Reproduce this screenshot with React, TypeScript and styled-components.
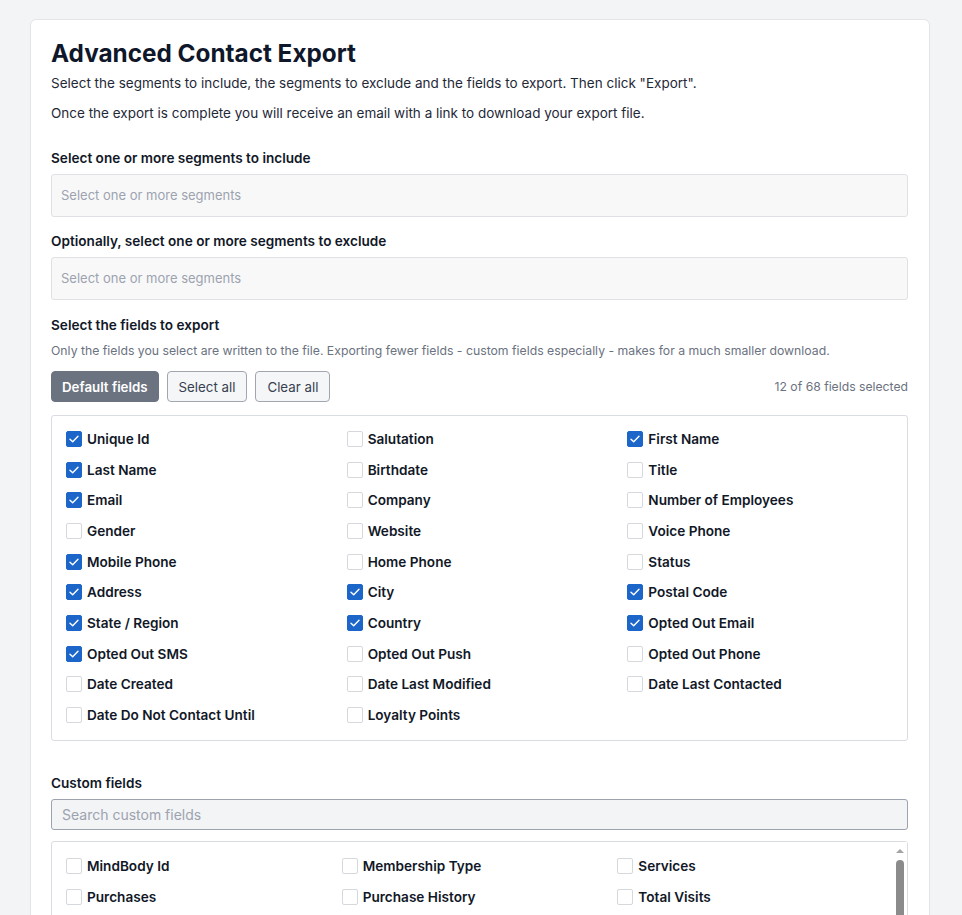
import React, { useState } from 'react';
import styled, { createGlobalStyle } from 'styled-components';

const GlobalStyle = createGlobalStyle`
  html, body {
    margin: 0;
    background: #f3f4f6;
    font-family: Inter, "Noto Sans", "Liberation Sans", sans-serif;
    color: #111827;
  }
  body {
    padding: 19px 32px 40px 30px;
  }
  * { box-sizing: border-box; }
`;

const Card = styled.div`
  background: #fff;
  border: 1px solid #e2e4e8;
  border-radius: 6px;
  padding: 17px 21px 24px 20px;
`;

const Title = styled.h1`
  margin: 0;
  font-size: 24.3px;
  line-height: 32px;
  font-weight: 700;
  color: #0f172a;
`;

const Intro = styled.p<{ $gap: number }>`
  margin: ${p => p.$gap}px 0 0;
  font-size: 13.5px;
  line-height: 20px;
  color: #1f2937;
`;

const Label = styled.div<{ $gap: number }>`
  margin-top: ${p => p.$gap}px;
  font-size: 13.6px;
  line-height: 20px;
  font-weight: 600;
  color: #111827;
`;

const Help = styled.div`
  margin-top: 6px;
  font-size: 12.26px;
  line-height: 20px;
  color: #6b7280;
`;

const SegmentSelect = styled.div`
  margin-top: 6px;
  height: 43px;
  display: flex;
  align-items: center;
  padding: 0 9px 2px;
  background: #f8f8f9;
  border: 1px solid #dfe1e5;
  border-radius: 3px;
  font-size: 13px;
  color: #9ca3af;
`;

const Toolbar = styled.div`
  margin-top: 10px;
  display: flex;
  align-items: center;
  gap: 8px;
`;

const Button = styled.button<{ $primary?: boolean }>`
  height: 31px;
  padding: 0 ${p => (p.$primary ? 10 : 11)}px;
  border-radius: 4px;
  font-family: inherit;
  font-size: 13.3px;
  font-weight: ${p => (p.$primary ? 600 : 400)};
  color: ${p => (p.$primary ? '#fff' : '#374151')};
  background: ${p => (p.$primary ? '#6b7280' : '#f5f6f7')};
  border: 1px solid ${p => (p.$primary ? '#6b7280' : '#a1a6ae')};
  cursor: pointer;
`;

const Count = styled.span`
  margin-left: auto;
  font-size: 12.2px;
  color: #6b7280;
`;

const FieldBox = styled.div<{ $gap: number }>`
  margin-top: ${p => p.$gap}px;
  border: 1px solid #d9dce1;
  border-radius: 3px;
  background: #fff;
`;

const FieldGrid = styled.div<{ $top?: number }>`
  display: grid;
  grid-template-columns: repeat(3, 1fr);
  column-gap: 15px;
  row-gap: 10.67px;
  padding: ${p => p.$top ?? 13}px 14px 15px;
`;

/* custom field list: clipped rows plus a classic scrollbar track */
const ScrollList = styled.div`
  height: 210px;
  display: flex;
`;

const ScrollBody = styled.div`
  flex: 1;
  min-width: 0;
  overflow: hidden;
`;

const Track = styled.div`
  flex: none;
  width: 15px;
  display: flex;
  flex-direction: column;
  align-items: center;
  padding-top: 7px;
  background: #fff;
`;

const ArrowUp = styled.span`
  width: 0;
  height: 0;
  border-left: 4px solid transparent;
  border-right: 4px solid transparent;
  border-bottom: 4px solid #a3a3a3;
`;

const Thumb = styled.span`
  margin-top: 7px;
  width: 8px;
  height: 150px;
  border-radius: 4px;
  background: #8b8b8b;
`;

const Field = styled.label`
  display: flex;
  align-items: center;
  gap: 5px;
  height: 20px;
  font-size: 13.6px;
  font-weight: 600;
  color: #111827;
  cursor: pointer;
  user-select: none;
  white-space: nowrap;
`;

const Box = styled.span<{ $on: boolean }>`
  flex: none;
  width: 16px;
  height: 16px;
  border-radius: 2px;
  display: flex;
  align-items: center;
  justify-content: center;
  background: ${p => (p.$on ? '#1d66c9' : '#fff')};
  border: 1px solid ${p => (p.$on ? '#1d66c9' : '#d5d8dd')};
`;

const Search = styled.input`
  margin-top: 6px;
  display: block;
  width: 100%;
  height: 31px;
  padding: 0 10px;
  background: #f3f4f6;
  border: 1px solid #9ca3af;
  border-radius: 3px;
  font-family: inherit;
  font-size: 14px;
  color: #111827;
  outline: none;
  &::placeholder { color: #9ca3af; }
`;

const standardFields: [string, boolean][] = [
  ['Unique Id', true], ['Salutation', false], ['First Name', true],
  ['Last Name', true], ['Birthdate', false], ['Title', false],
  ['Email', true], ['Company', false], ['Number of Employees', false],
  ['Gender', false], ['Website', false], ['Voice Phone', false],
  ['Mobile Phone', true], ['Home Phone', false], ['Status', false],
  ['Address', true], ['City', true], ['Postal Code', true],
  ['State / Region', true], ['Country', true], ['Opted Out Email', true],
  ['Opted Out SMS', true], ['Opted Out Push', false], ['Opted Out Phone', false],
  ['Date Created', false], ['Date Last Modified', false], ['Date Last Contacted', false],
  ['Date Do Not Contact Until', false], ['Loyalty Points', false],
];

const customFields = [
  'MindBody Id', 'Membership Type', 'Services',
  'Purchases', 'Purchase History', 'Total Visits',
  'First Visit', 'Last Visit', 'Home Location',
  'Referral Source', 'Client Type', 'Account Balance',
  'Contract Name', 'Contract End Date', 'Instructor',
  'Class Count', 'Emergency Contact', 'Notes',
];

const Check = ({ on }: { on: boolean }) => (
  <Box $on={on}>
    {on && (
      <svg width="10" height="8" viewBox="0 0 10 8" fill="none">
        <path d="M1 4.2 3.7 6.8 9 1.2" stroke="#fff" strokeWidth="1.4" strokeLinecap="round" strokeLinejoin="round" />
      </svg>
    )}
  </Box>
);

const FieldItem = ({ name, checked, onToggle }: { name: string; checked: boolean; onToggle: () => void }) => (
  <Field onClick={onToggle}>
    <Check on={checked} />
    {name}
  </Field>
);

export default function App() {
  const [selected, setSelected] = useState<Record<string, boolean>>(
    Object.fromEntries(standardFields.map(([n, on]) => [n, on]))
  );
  const [custom, setCustom] = useState<Record<string, boolean>>({});

  const total = standardFields.length + 39;
  const count =
    Object.values(selected).filter(Boolean).length + Object.values(custom).filter(Boolean).length;

  const toggle = (name: string) => setSelected(s => ({ ...s, [name]: !s[name] }));
  const toggleCustom = (name: string) => setCustom(s => ({ ...s, [name]: !s[name] }));

  return (
    <>
      <GlobalStyle />
      <Card>
        <Title>Advanced Contact Export</Title>
        <Intro $gap={4}>
          Select the segments to include, the segments to exclude and the fields to export. Then click "Export".
        </Intro>
        <Intro $gap={10}>
          Once the export is complete you will receive an email with a link to download your export file.
        </Intro>

        <Label $gap={25}>Select one or more segments to include</Label>
        <SegmentSelect>Select one or more segments</SegmentSelect>

        <Label $gap={14}>Optionally, select one or more segments to exclude</Label>
        <SegmentSelect>Select one or more segments</SegmentSelect>

        <Label $gap={15}>Select the fields to export</Label>
        <Help>
          Only the fields you select are written to the file. Exporting fewer fields - custom fields especially - makes for a much smaller download.
        </Help>

        <Toolbar>
          <Button $primary>Default fields</Button>
          <Button>Select all</Button>
          <Button>Clear all</Button>
          <Count>{count} of {total} fields selected</Count>
        </Toolbar>

        <FieldBox $gap={13}>
          <FieldGrid>
            {standardFields.map(([name]) => (
              <FieldItem key={name} name={name} checked={!!selected[name]} onToggle={() => toggle(name)} />
            ))}
          </FieldGrid>
        </FieldBox>

        <Label $gap={32}>Custom fields</Label>
        <Search placeholder="Search custom fields" />

        <FieldBox $gap={11}>
          <ScrollList>
            <ScrollBody>
              <FieldGrid $top={14}>
                {customFields.map(name => (
                  <FieldItem key={name} name={name} checked={!!custom[name]} onToggle={() => toggleCustom(name)} />
                ))}
              </FieldGrid>
            </ScrollBody>
            <Track>
              <ArrowUp />
              <Thumb />
            </Track>
          </ScrollList>
        </FieldBox>
      </Card>
    </>
  );
}
